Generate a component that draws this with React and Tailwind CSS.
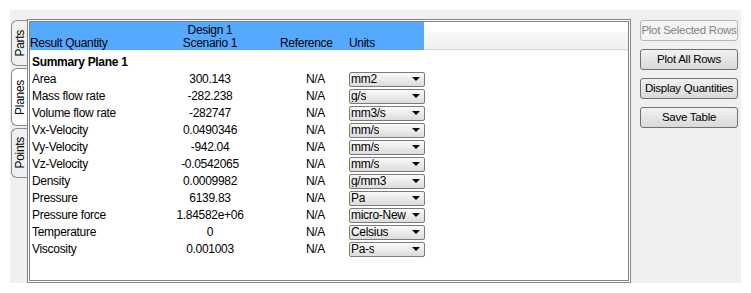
import React from 'react';

const rows = [
    { name: 'Area', value: '300.143', unit: 'mm2' },
    { name: 'Mass flow rate', value: '-282.238', unit: 'g/s' },
    { name: 'Volume flow rate', value: '-282747', unit: 'mm3/s' },
    { name: 'Vx-Velocity', value: '0.0490346', unit: 'mm/s' },
    { name: 'Vy-Velocity', value: '-942.04', unit: 'mm/s' },
    { name: 'Vz-Velocity', value: '-0.0542065', unit: 'mm/s' },
    { name: 'Density', value: '0.0009982', unit: 'g/mm3' },
    { name: 'Pressure', value: '6139.83', unit: 'Pa' },
    { name: 'Pressure force', value: '1.84582e+06', unit: 'micro-New' },
    { name: 'Temperature', value: '0', unit: 'Celsius' },
    { name: 'Viscosity', value: '0.001003', unit: 'Pa-s' },
];

const tabs = [
    { label: 'Parts', h: 'h-[46px]', active: false },
    { label: 'Planes', h: 'h-[58px]', active: true },
    { label: 'Points', h: 'h-[50px]', active: false },
];

const buttons = ['Plot Selected Rows', 'Plot All Rows', 'Display Quantities', 'Save Table'];

const UnitSelect = ({ unit }) => (
    <div className="w-[76px] h-[15px] flex items-center justify-between border border-[#7a7a7a] rounded-[2px] bg-gradient-to-b from-[#fafafa] to-[#dcdcdc] pl-[1px] pr-[4px] overflow-hidden">
        <span className="leading-none whitespace-nowrap overflow-hidden">{unit}</span>
        <svg width="8" height="4" viewBox="0 0 8 4" className="shrink-0">
            <polygon points="0,0 8,0 4,4" fill="#000" />
        </svg>
    </div>
);

export default function App() {
    return (
        <div className="w-[751px] h-[293px] bg-white p-[10px] text-[12px] tracking-[-0.3px] text-black" style={{ fontFamily: '"Liberation Sans", Arial, sans-serif' }}>
            <div className="w-[731px] h-[273px] bg-[#f0f0f0] flex">
                {/* vertical tabs */}
                <div className="w-[17px] pt-[10px] flex flex-col gap-[2px]">
                    {tabs.map((t) => (
                        <div
                            key={t.label}
                            className={`${t.h} ml-[1px] flex items-center justify-center border border-r-0 border-[#8c8c8c] rounded-l-[6px] ${
                                t.active ? 'bg-white w-[17px]' : 'bg-[#f0f0f0] w-[16px]'
                            }`}
                        >
                            <span className="[writing-mode:vertical-rl] rotate-180 leading-none">{t.label}</span>
                        </div>
                    ))}
                </div>

                {/* table frame */}
                <div className="mt-[9px] w-[604px] h-[264px] border-[3px] border-double border-[#7f838a] bg-white flex flex-col">
                    <div className="flex h-[28px]">
                        <div className="w-[394px] bg-[#55aaff] grid grid-cols-[120px_120px_70px_84px] items-end leading-[13px]">
                            <div>Result Quantity</div>
                            <div className="text-center">
                                Design 1
                                <br />
                                Scenario 1
                            </div>
                            <div className="pl-[10px]">Reference</div>
                            <div className="pl-[9px]">Units</div>
                        </div>
                        <div className="flex-1 flex flex-col justify-end">
                            <div className="h-[18px] bg-gradient-to-b from-[#f7f7f8] to-[#f0f0f1] border-b border-[#d5d5d5]" />
                        </div>
                    </div>

                    <div className="pt-[3px] pl-[2px]">
                        <div className="h-[17px] flex items-center font-bold">Summary Plane 1</div>
                        {rows.map((r) => (
                            <div key={r.name} className="h-[17px] grid grid-cols-[118px_120px_70px_84px] items-center">
                                <div className="whitespace-nowrap">{r.name}</div>
                                <div className="text-center">{r.value}</div>
                                <div className="text-right pr-[15px]">N/A</div>
                                <div className="pl-[9px]">
                                    <UnitSelect unit={r.unit} />
                                </div>
                            </div>
                        ))}
                    </div>
                </div>

                {/* buttons */}
                <div className="ml-[9px] pt-[10px] flex flex-col gap-[8px]">
                    {buttons.map((b, i) => (
                        <button
                            key={b}
                            className={`w-[98px] h-[21px] px-0 rounded-[3px] border text-[11.5px] tracking-[-0.25px] leading-none whitespace-nowrap ${
                                i === 0
                                    ? 'border-[#b5b5b5] bg-[#f4f4f4] text-[#838383]'
                                    : 'border-[#707070] bg-gradient-to-b from-[#f2f2f2] to-[#d9d9d9] text-black'
                            }`}
                        >
                            {b}
                        </button>
                    ))}
                </div>
            </div>
        </div>
    );
}
